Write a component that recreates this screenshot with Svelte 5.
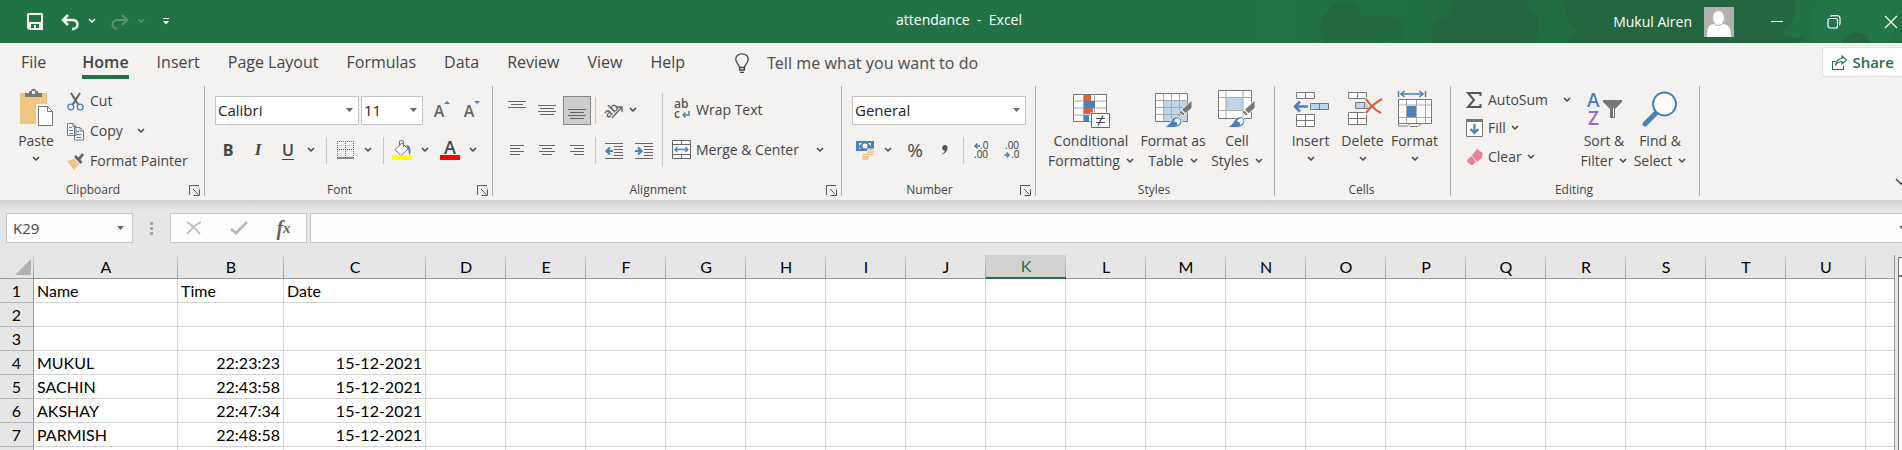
<script>
  const tabs = ['File', 'Home', 'Insert', 'Page Layout', 'Formulas', 'Data', 'Review', 'View', 'Help'];
  const columns = 'ABCDEFGHIJKLMNOPQRSTU'.split('');
  const widths = { A: 144, B: 106, C: 142 };
  const selected = 'K';
  const rows = [
    ['Name', 'Time', 'Date'],
    [],
    [],
    ['MUKUL', '22:23:23', '15-12-2021'],
    ['SACHIN', '22:43:58', '15-12-2021'],
    ['AKSHAY', '22:47:34', '15-12-2021'],
    ['PARMISH', '22:48:58', '15-12-2021'],
    []
  ];
  const isNumeric = (v) => /^\d/.test(v ?? '');
  const aligns = {
    top: 'M0 1.5h18M3 4.5h12M0 7.5h18',
    middle: 'M0 5.5h18M2 8.5h14M0 11.5h18M2 14.5h14',
    bottom: 'M0 9.5h18M2 12.5h14M0 15.5h18M2 18.5h14',
    left: 'M2 5.5h14M2 8.5h10M2 11.5h14M2 14.5h10',
    center: 'M1 5.5h16M4 8.5h10M1 11.5h16M4 14.5h10',
    right: 'M2 5.5h14M6 8.5h10M2 11.5h14M6 14.5h10'
  };
</script>

{#snippet chev()}
  <svg class="chev" width="8" height="6" viewBox="0 0 8 6"><path d="M1 1l3 3 3-3" fill="none" stroke="currentColor" stroke-width="1.5" /></svg>
{/snippet}

{#snippet tri()}
  <svg class="tri" width="7" height="4" viewBox="0 0 7 4"><path d="M0 0h7L3.500 4z" fill="#666" /></svg>
{/snippet}

{#snippet launcher(name)}
  <button class="launcher" aria-label={name}>
    <svg width="11" height="11" viewBox="0 0 11 11" fill="none" stroke="#555"><path d="M.5 10V.5H10M4 4l5.500 5.500M10.500 4.500v6h-6" /></svg>
  </button>
{/snippet}

{#snippet lines(d)}
  <svg width="18" height="20" viewBox="0 0 18 20"><path {d} stroke="#666" fill="none" /></svg>
{/snippet}

{#snippet brush()}
  <path d="M37 8v8l-9 8-4-4z" fill="#777" stroke="#f3f2f1" />
  <path d="M26 17.500l5 5" stroke="#f3f2f1" stroke-width="1.500" />
  <path d="M9 35.500c4-2 6-4 7.500-7.500s7-4.500 9.500-1.500-.5 7.500-4 8.500-8 .5-13 .5z" fill="#4a80bb" stroke="#f3f2f1" />
  <path d="M19 29.500c1-3.500 4.500-4 6-2s-.5 5-3 5.500c.5-2-.5-3.500-3-3.500z" fill="#fff" />
{/snippet}

<div class="app">
  <header class="titlebar">
    <svg class="pattern" width="642" height="43" viewBox="0 0 642 43" aria-hidden="true">
      <defs>
        <linearGradient id="fade"><stop offset="0" stop-color="#217346" /><stop offset=".35" stop-color="#226d43" /><stop offset="1" stop-color="#217346" /></linearGradient>
      </defs>
      <rect width="642" height="43" fill="url(#fade)" />
      <circle cx="592" cy="24" r="42" fill="#217a49" opacity=".35" />
      <g fill="#246641">
        <path d="M65 43l-5-8c-2-14 8-33 24-33 12 0 16 8 19 15 14-3 41-3 41 10 0 10-3 12-10 12l-25 4z" opacity=".7" />
        <path d="M173 43c-3-12 0-22 8-24 8-1 9-12 15-19h68c6 6 8 12 13 16 4 10 1 22-4 27z" />
        <path d="M304 0c0 14 6 27 14 31-4 3-9 8-10 12h225c9-1 12-4 12-7-14 3-28 0-20-7 12-10 10-18 9-29z" />
        <path d="M582 43c3-12 22-16 29 0z" />
      </g>
    </svg>
    <div class="quick">
      <button aria-label="Save"><svg width="16" height="17" viewBox="0 0 16 17"><path fill="#f3f2f1" fill-rule="evenodd" d="M1 0h14l1 1v16H2l-2-2V1zM2 2v7h12V2zM4 11v4h3v-3h2v3h3v-4z" /></svg></button>
      <button class="undo" aria-label="Undo"><svg width="19" height="16" viewBox="0 0 19 16"><path d="M7 1L2 6l5 5M2 6h9c4 0 5.500 2 5.500 4.500S14 15 11 15" fill="none" stroke="#f3f2f1" stroke-width="2.600" /></svg></button>
      <button class="more" aria-label="Undo list">{@render chev()}</button>
      <button class="undo off" aria-label="Redo"><svg width="19" height="16" viewBox="0 0 19 16"><path d="M12 1l5 5-5 5M17 6H8c-4 0-5.500 2-5.500 4.500S5 15 7 15" fill="none" stroke="#f3f2f1" stroke-width="2.200" /></svg></button>
      <button class="more off" aria-label="Redo list">{@render chev()}</button>
      <button class="custom" aria-label="Customize toolbar"><svg width="6" height="7" viewBox="0 0 6 7"><path d="M0 0h6v1H0zM0 3h6L3 6.500z" fill="#fff" /></svg></button>
    </div>
    <h1>attendance&nbsp; -&nbsp; Excel</h1>
    <div class="account">
      <span>Mukul Airen</span>
      <svg class="avatar" width="30" height="30" viewBox="0 0 30 30"><path fill="#b1b1b1" d="M0 0h30v30H0z" /><path d="M3 30c0-8 1-13 7-13 2 2 7 2 9 0 6 0 8 5 8 13z" fill="#fff" /><ellipse cx="14.500" cy="11" rx="6" ry="7.500" fill="#fff" stroke="#b1b1b1" /></svg>
      <button class="win" aria-label="Minimize"><svg width="14" height="14" viewBox="0 0 14 14"><path d="M1 6.500h12" stroke="#fff" /></svg></button>
      <button class="win" aria-label="Restore"><svg width="14" height="14" viewBox="0 0 14 14" fill="none" stroke="#fff" stroke-width="1.200"><rect x="1" y="3.500" width="9.500" height="9.500" rx="2" /><path d="M3.500 1.500c.5-.6 1-.8 2-.8H10c2 0 3 1.300 3 3V8c0 1.200-.3 1.800-1 2.300" /></svg></button>
      <button class="win close" aria-label="Close"><svg width="14" height="14" viewBox="0 0 14 14"><path d="M1 1l12 12M13 1L1 13" stroke="#fff" stroke-width="1.200" /></svg></button>
    </div>
  </header>

  <nav class="tabs">
    {#each tabs as tab}
      <a href="#{tab}" class:active={tab === 'Home'} class:file={tab === 'File'}>{tab}</a>
    {/each}
    <label class="tell">
      <svg width="14" height="20" viewBox="0 0 14 20" fill="none" stroke="#444" stroke-width="1.300"><path d="M4.500 14.500c0-3-3.700-4-3.700-8C.8 3 3.500.8 7 .8S13.200 3 13.200 6.500c0 4-3.700 5-3.700 8zM4.500 14v3h5v-3M5 19.300h4" /></svg>
      <input placeholder="Tell me what you want to do" aria-label="Tell me what you want to do" />
    </label>
    <button class="share">
      <svg width="15" height="15" viewBox="0 0 15 15" fill="none" stroke="#217346"><path d="M3.500 6.500h-3v8h11v-4M10 1l4.500 4L10 9V6.500C7 6.500 5 7.500 3.500 10.500c.5-4 2.500-7 6.500-7z" stroke-width="1.100" /></svg>
      Share
    </button>
  </nav>

  <div class="ribbon">
    <section class="group clipboard">
      <div class="body">
        <button class="big paste">
          <span class="icon"><svg width="36" height="40" viewBox="0 0 36 40"><path d="M2 5h27v31H2z" fill="#eec880" /><path d="M7 9V5h4V3h2c0-3 5-3 5 0h2v2h4v4z" fill="#777" /><path d="M14 3h3v3h-3z" fill="#f3f2f1" /><path d="M19.500 17.500h10l6 6v14h-16z" fill="#fff" stroke="#f3f2f1" stroke-width="3" /><path d="M20.500 18.500h9l5 5v14h-14zM29.500 18.500v5h5" fill="#fff" stroke="#777" /></svg></span>
          <span>Paste</span>{@render chev()}
        </button>
        <div class="stack">
          <button class="item"><svg width="17" height="19" viewBox="0 0 17 19" fill="none"><path d="M4 1l7.500 12M13 1L5.500 13" stroke="#666" stroke-width="2" /><circle cx="3.800" cy="15" r="2.900" stroke="#4a80bb" stroke-width="1.300" /><circle cx="13.200" cy="15" r="2.900" stroke="#4a80bb" stroke-width="1.300" /></svg>Cut</button>
          <button class="item"><svg width="17" height="19" viewBox="0 0 17 19"><path d="M.5 1.500H6l3 3v9H.5zM7.500 5.500H13l3.500 3.500v9H7.500z" fill="#fff" stroke="#777" /><path d="M6 1.500v3h3M13 5.500V9h3.500" fill="none" stroke="#777" /><path d="M2 5.500h3M2 8.500h4M2 11.500h4M9.500 9.500H12M9.500 12.500h5M9.500 15.500h5" stroke="#4a80bb" /></svg>Copy<span class="far">{@render chev()}</span></button>
          <button class="item"><svg width="17" height="19" viewBox="0 0 17 19"><path d="M0 9l7-2 5 5-5 6z" fill="#eec38a" /><path d="M7 5l2-2 2.500 2.500L15 1l2 2-3.500 4.500L15.500 10l-2 2z" fill="#666" /></svg>Format Painter</button>
        </div>
      </div>
      <footer><span>Clipboard</span>{@render launcher('Clipboard settings')}</footer>
    </section>

    <section class="group font">
      <div class="body rows">
        <div class="row">
          <span class="combo wide"><select aria-label="Font name"><option>Calibri</option></select>{@render tri()}</span>
          <span class="combo small"><select aria-label="Font size"><option>11</option></select>{@render tri()}</span>
          <div class="sizers">
            <button class="btn grow" aria-label="Increase font size"><span>A</span><svg width="6" height="3" viewBox="0 0 6 3"><path d="M0 3l3-3 3 3z" fill="#4a80bb" /></svg></button>
            <button class="btn grow" aria-label="Decrease font size"><span>A</span><svg width="6" height="3" viewBox="0 0 6 3"><path d="M0 0l3 3 3-3z" fill="#4a80bb" /></svg></button>
          </div>
        </div>
        <div class="row tools">
          <button class="btn bold">B</button>
          <button class="btn italic">I</button>
          <button class="btn under">U</button>
          <button class="drop" aria-label="Underline style">{@render chev()}</button>
          <i class="sep"></i>
          <button class="btn" aria-label="Borders"><svg width="17" height="18" viewBox="0 0 17 18" fill="none" stroke="#666"><path d="M0 .5h17M0 8.500h17M.5 0v17M8.500 0v17M16.500 0v17" stroke-dasharray="1 1" /><path d="M0 17h17" stroke-width="1.500" /></svg></button>
          <button class="drop" aria-label="Border styles">{@render chev()}</button>
          <i class="sep"></i>
          <button class="btn" aria-label="Fill colour"><svg width="20" height="20" viewBox="0 0 20 20"><path d="M3 9.500L10 3l6 6-7 6.500z" fill="#fff" stroke="#777" /><path d="M7.500 6V2c0-2 4-2 4 0v5" fill="none" stroke="#777" stroke-width="1.200" /><path d="M14 5c4 0 5.500 4 4 10-1-1-2-3-1.500-5z" fill="#4a80bb" /><path d="M0 15h20v5H0z" fill="#ff0" /></svg></button>
          <button class="drop" aria-label="Fill colours">{@render chev()}</button>
          <button class="btn colour" aria-label="Font colour"><span>A</span><i></i></button>
          <button class="drop" aria-label="Font colours">{@render chev()}</button>
        </div>
      </div>
      <footer><span>Font</span>{@render launcher('Font settings')}</footer>
    </section>

    <section class="group alignment">
      <div class="body">
        <div class="rows">
          <div class="row tools">
            <button class="btn" aria-label="Top align">{@render lines(aligns.top)}</button>
            <button class="btn" aria-label="Middle align">{@render lines(aligns.middle)}</button>
            <button class="btn pressed" aria-label="Bottom align">{@render lines(aligns.bottom)}</button>
            <i class="sep tight"></i>
            <button class="btn" aria-label="Orientation"><svg width="20" height="20" viewBox="0 0 20 20"><text x="-1" y="16" font-family="Open Sans, sans-serif" font-size="13" font-weight="600" fill="#666" transform="rotate(-45 5 11)">ab</text><path d="M8 18L18 7M13 7h5v5" fill="none" stroke="#666" stroke-width="1.300" /></svg></button>
            <button class="drop near" aria-label="Orientation options">{@render chev()}</button>
          </div>
          <div class="row tools">
            <button class="btn" aria-label="Align left">{@render lines(aligns.left)}</button>
            <button class="btn" aria-label="Centre">{@render lines(aligns.center)}</button>
            <button class="btn" aria-label="Align right">{@render lines(aligns.right)}</button>
            <i class="sep tight"></i>
            <button class="btn" aria-label="Decrease indent"><svg width="18" height="17" viewBox="0 0 18 17"><path d="M0 1.500h18M9 4.500h9M9 7.500h9M9 10.500h9M9 13.500h9M0 16.500h18" stroke="#666" /><path d="M8 9H2M5 5.500L1.500 9 5 12.500" fill="none" stroke="#4a80bb" stroke-width="2.200" /></svg></button>
            <button class="btn" aria-label="Increase indent"><svg width="18" height="17" viewBox="0 0 18 17"><path d="M0 1.500h18M9 4.500h9M9 7.500h9M9 10.500h9M9 13.500h9M0 16.500h18" stroke="#666" /><path d="M0 9h6M3 5.500L6.500 9 3 12.500" fill="none" stroke="#4a80bb" stroke-width="2.200" /></svg></button>
          </div>
        </div>
        <i class="sep tall"></i>
        <div class="rows">
          <button class="item"><svg width="20" height="20" viewBox="0 0 20 20"><text x="2" y="8" font-family="Open Sans, sans-serif" font-size="12" font-weight="600" fill="#555">ab</text><text x="2" y="18" font-family="Open Sans, sans-serif" font-size="12" font-weight="600" fill="#555">c</text><path d="M17 11v4h-6M13.500 12.500L11 15l2.500 2.500" fill="none" stroke="#4a80bb" stroke-width="1.500" /></svg>Wrap Text</button>
          <button class="item"><svg width="20" height="20" viewBox="0 0 20 20"><path d="M.5.5h18v18H.5zM.5 4.500h18M.5 14.500h18M9.500.5v4M9.500 14.500v4" fill="#fff" stroke="#666" /><path d="M3 9.500h13M5.500 7L3 9.500 5.500 12M13.500 7L16 9.500 13.500 12" fill="none" stroke="#4a80bb" stroke-width="1.300" /></svg>Merge &amp; Center<span class="far">{@render chev()}</span></button>
        </div>
      </div>
      <footer><span>Alignment</span>{@render launcher('Alignment settings')}</footer>
    </section>

    <section class="group number">
      <div class="body rows">
        <div class="row">
          <span class="combo full"><select aria-label="Number format"><option>General</option></select>{@render tri()}</span>
        </div>
        <div class="row tools">
          <button class="btn" aria-label="Accounting format"><svg width="20" height="20" viewBox="0 0 20 20"><path d="M1 1h18v10H1z" fill="#4a80bb" /><path d="M4 3h3L4 6zM16 3h-3l3 3zM4 9h2L4 7z" fill="#fff" /><circle cx="10" cy="6" r="2.500" fill="#fff" /><path d="M12 8.500h7.500v7H15V19H7v-6h5z" fill="#f3f2f1" /><path d="M12.500 9.500h6M12 12h7M12.500 14.500h6M7.500 14.500h6M7 17h7M7.500 19h6" stroke="#eec07a" stroke-width="1.700" /></svg></button>
          <button class="drop" aria-label="Accounting formats">{@render chev()}</button>
          <button class="btn percent">%</button>
          <button class="btn comma" aria-label="Comma style"><svg width="6" height="10" viewBox="0 0 6 10"><path d="M3 0c4 0 3.500 7-2.500 9.500L0 9c2-1.200 2.800-2.500 2.800-3.500C-.8 5.500-.5 0 3 0z" fill="#555" /></svg></button>
          <i class="sep tight"></i>
          <button class="btn" aria-label="Increase decimal"><svg width="18" height="20" viewBox="0 0 18 20" font-family="Open Sans, sans-serif" font-size="10" fill="#333"><text x="7" y="9">.0</text><text x="1" y="18">.00</text><path d="M7 6H2M4.500 3.500L2 6l2.500 2.500" fill="none" stroke="#4a80bb" stroke-width="1.600" /></svg></button>
          <button class="btn" aria-label="Decrease decimal"><svg width="18" height="20" viewBox="0 0 18 20" font-family="Open Sans, sans-serif" font-size="10" fill="#333"><text x="2" y="9">.00</text><text x="8" y="18">.0</text><path d="M1 15h5M3.500 12.500L6 15l-2.500 2.500" fill="none" stroke="#4a80bb" stroke-width="1.600" /></svg></button>
        </div>
      </div>
      <footer><span>Number</span>{@render launcher('Number settings')}</footer>
    </section>

    <section class="group styles">
      <div class="body">
        <button class="big w88">
          <span class="icon"><svg width="38" height="36" viewBox="-1 0 38 36"><path d="M.5 2.500h33v27H.5z" fill="#fff" stroke="#777" /><path d="M1 9h32M1 16h32M1 23h32M10.500 3v26M21.500 3v26" stroke="#aaa" /><path d="M11 3h7v6h-7zM11 16h9v6h-9z" fill="#d96040" /><path d="M11 9h11v7H11zM11 23h5v6h-5z" fill="#4a80bb" /><path d="M17.500 20.500h19v15h-19z" fill="#f3f2f1" /><path d="M18.500 21.500h18v14h-18z" fill="#fff" stroke="#666" /><path d="M23 26.500h9M23 30.500h9M30 23.500l-5 10" stroke="#444" stroke-width="1.200" /></svg></span>
          <span>Conditional</span><span>Formatting {@render chev()}</span>
        </button>
        <button class="big w76">
          <span class="icon"><svg width="42" height="36" viewBox="-3 0 42 36"><path d="M.5 1.500h32v28H.5z" fill="#fff" stroke="#777" /><path d="M9 9h23v20H9z" fill="#c0d4e9" /><path d="M1 8.500h32M1 15.500h32M1 22.500h32M8.500 2v27M16.500 2v27M24.500 2v27" stroke="#aaa" />{@render brush()}</svg></span>
          <span>Format as</span><span>Table {@render chev()}</span>
        </button>
        <button class="big w52">
          <span class="icon"><svg width="38" height="38" viewBox="0 -2 38 38"><path d="M.5-1.500h33v28H.5z" fill="#fff" stroke="#777" /><path d="M8 5h17v14H8z" fill="#c0d4e9" /><path d="M1 5.500h32M1 18.500h32M8-1v27M25-1v27" stroke="#aaa" />{@render brush()}</svg></span>
          <span>Cell</span><span>Styles {@render chev()}</span>
        </button>
      </div>
      <footer><span>Styles</span></footer>
    </section>

    <section class="group cells">
      <div class="body">
        <button class="big w52">
          <span class="icon"><svg width="38" height="38" viewBox="0 0 38 38"><path d="M4.500 2.500h18v6h-18zM13.500 2.500v6M4.500 24.500h18v12h-18zM4.500 30.500h18M13.500 24.500v12" fill="#fff" stroke="#777" /><path d="M18.500 13.500h18v6h-18zM27.500 13.500v6" fill="#c0d4e9" stroke="#777" /><path d="M16 16.500H3M8 11.500l-5 5 5 5" fill="none" stroke="#4a80bb" stroke-width="2.500" /></svg></span>
          <span>Insert</span>{@render chev()}
        </button>
        <button class="big w52">
          <span class="icon"><svg width="38" height="38" viewBox="0 0 38 38"><path d="M4.500 2.500h18v6h-18zM13.500 2.500v6M4.500 22.500h18v12h-18zM4.500 28.500h18M13.500 22.500v12" fill="#fff" stroke="#777" /><path d="M11.500 12.500h14v6h-14zM20.500 12.500v6" fill="#c0d4e9" stroke="#777" /><path d="M21 9l15 14M38 9L22 24" stroke="#f3f2f1" stroke-width="5" /><path d="M22 9c4 6 9 11 15 14M38 9c-7 4-12 8-16 14" fill="none" stroke="#d96040" stroke-width="2.200" /></svg></span>
          <span>Delete</span>{@render chev()}
        </button>
        <button class="big w52">
          <span class="icon"><svg width="36" height="38" viewBox="0 0 36 38"><path d="M1.500 9.500h33v24h-33zM1.500 33v3h9l3-3M13 36.500h8l3-3" fill="#fff" stroke="#777" /><path d="M2 15h32M2 27.500h32M9.500 10v23M19.500 10v23M28.500 10v23" stroke="#aaa" /><path d="M10 16h9v11h-9z" fill="#4a80bb" /><path d="M1.500 1v6M28.500 1v6M4 4h22M7.500 1L4 4l3.500 3M22.500 1L26 4l-3.500 3" fill="none" stroke="#4a80bb" stroke-width="1.500" /></svg></span>
          <span>Format</span>{@render chev()}
        </button>
      </div>
      <footer><span>Cells</span></footer>
    </section>

    <section class="group editing">
      <div class="body">
        <div class="stack">
          <button class="item"><svg width="18" height="18" viewBox="0 0 18 18"><path d="M15.500 5V2H3l6 7-6 7h12.500v-3" fill="none" stroke="#555" stroke-width="2" /></svg>AutoSum<span class="far">{@render chev()}</span></button>
          <button class="item"><svg width="18" height="18" viewBox="0 0 18 18"><path d="M1.500.5h16v17h-16z" fill="#fff" stroke="#777" /><path d="M1 0h17v3H1z" fill="#777" /><path d="M9.500 5v9M5.500 10l4 4 4-4" fill="none" stroke="#4a80bb" stroke-width="2.200" /></svg>Fill {@render chev()}</button>
          <button class="item"><svg width="18" height="18" viewBox="0 0 18 18"><path d="M12 1.500l5 3.500v4l-5 4.500-4.500-6z" fill="#e88496" stroke="#e88496" stroke-linejoin="round" /><path d="M6.500 8L11 14l-3.500 3H6l-4-3.500V12z" fill="#e88496" /></svg>Clear {@render chev()}</button>
        </div>
        <button class="big w56">
          <span class="icon"><svg width="36" height="38" viewBox="0 0 36 38" font-family="Open Sans, sans-serif" font-size="19" font-weight="600"><text x="1" y="17" fill="#4a80bb">A</text><text x="2" y="35" fill="#9b67b8">Z</text><path d="M17 10h19v2l-7 7v9h-5v-9l-7-7z" fill="#777" /><path d="M27 18h1v9h-1z" fill="#fff" /></svg></span>
          <span>Sort &amp;</span><span>Filter {@render chev()}</span>
        </button>
        <button class="big w56">
          <span class="icon"><svg width="36" height="38" viewBox="0 0 36 38"><path d="M3 34l12-12" stroke="#4a80bb" stroke-width="5" stroke-linecap="round" /><circle cx="22.500" cy="14" r="11.500" fill="#fff" stroke="#4a80bb" stroke-width="2" /></svg></span>
          <span>Find &amp;</span><span>Select {@render chev()}</span>
        </button>
      </div>
      <footer><span>Editing</span></footer>
    </section>
    <button class="collapse" aria-label="Collapse ribbon"><svg width="12" height="8" viewBox="0 0 12 8"><path d="M1 1l5 5 5-5" fill="none" stroke="#444" stroke-width="1.500" /></svg></button>
  </div>

  <div class="formula">
    <span class="combo name"><input aria-label="Name box" value="K29" />{@render tri()}</span>
    <span class="dots"><i></i><i></i><i></i></span>
    <div class="entry">
      <button aria-label="Cancel"><svg width="16" height="14" viewBox="0 0 16 14"><path d="M1 1c5 3 9 7 13 12M15 1C9 4 5 8 1 13" fill="none" stroke="#bbb" stroke-width="1.800" /></svg></button>
      <button aria-label="Enter"><svg width="18" height="14" viewBox="0 0 18 14"><path d="M1 8l5 4L17 1" fill="none" stroke="#bbb" stroke-width="2.800" /></svg></button>
      <button class="fx">f<small>x</small></button>
    </div>
    <div class="bar"><input aria-label="Formula bar" />{@render tri()}</div>
  </div>

  <main class="sheet">
    <table>
      <colgroup>
        <col style="width: 34px" />
        {#each columns as c}<col style="width: {widths[c] ?? 80}px" />{/each}
        <col />
      </colgroup>
      <thead>
        <tr>
          <th class="corner"><svg width="16" height="16" viewBox="0 0 16 16"><path d="M16 0v16H0z" fill="#b2b2b2" /></svg></th>
          {#each columns as c}<th class:on={c === selected}>{c}</th>{/each}
          <th></th>
        </tr>
      </thead>
      <tbody>
        {#each rows as row, r}
          <tr>
            <th>{r + 1}</th>
            {#each columns as _, c}<td class:num={isNumeric(row[c])}>{row[c] ?? ''}</td>{/each}
            <td></td>
          </tr>
        {/each}
      </tbody>
    </table>
    <div class="scroll"><i></i></div>
  </main>
</div>

<style>
  :global(body) { margin: 0; }
  * { box-sizing: border-box; }
  .app {
    height: 100vh;
    overflow: hidden;
    display: flex;
    flex-direction: column;
    background: #e6e6e6;
    color: #444;
    font: 14px/20px "Open Sans", "Noto Sans", sans-serif;
  }
  button, input, select {
    margin: 0;
    padding: 0;
    border: 0;
    background: none;
    color: inherit;
    font: inherit;
    outline: 0;
    appearance: none;
  }
  svg { flex: none; display: block; overflow: visible; }

  .titlebar {
    position: relative;
    flex: none;
    height: 43px;
    display: grid;
    grid-template-columns: 1fr auto 1fr;
    align-items: center;
    background: #217346;
    color: #fff;
  }
  .titlebar > * { position: relative; }
  .titlebar .pattern { position: absolute; top: 0; right: 0; overflow: hidden; }
  h1 { margin: 0 0 4px 16px; font-size: 14px; font-weight: 400; line-height: 20px; }
  .quick { display: flex; align-items: center; padding-left: 27px; height: 43px; }
  .quick button { display: flex; }
  .quick .undo { margin-left: 18px; }
  .quick .more { margin: 0 -4px 2px 8px; }
  .quick .custom { margin-left: 22px; }
  .quick .off { opacity: .25; }
  .account { display: flex; align-items: center; justify-content: flex-end; }
  .avatar { margin: 0 14px 0 12px; }
  .win { width: 57px; height: 43px; display: grid; place-items: center; }
  .close { width: 40px; justify-items: start; padding-left: 22px; }

  .tabs {
    flex: none;
    display: flex;
    align-items: center;
    gap: 28px;
    height: 43px;
    padding-left: 21px;
    background: #f3f2f1;
    font-size: 16px;
  }
  .tabs a { height: 36px; margin-bottom: 7px; line-height: 38px; color: #444; text-decoration: none; white-space: nowrap; }
  .tabs .file { margin-right: 8px; }
  .tabs .active { font-weight: 600; border-bottom: 4px solid #217346; }
  .tell { display: flex; align-items: center; gap: 18px; margin: 0 0 4px 22px; font-family: "Noto Sans", sans-serif; }
  .tell input { width: 260px; line-height: 24px; }
  .tell input::placeholder { color: #555; opacity: 1; }
  .share {
    display: flex;
    align-items: center;
    gap: 5px;
    height: 30px;
    margin: 0 0 5px auto;
    padding: 0 8px 0 9px;
    border: 1px solid #e1dfdd;
    border-right: 0;
    border-radius: 3px 0 0 3px;
    background: #fff;
    color: #217346;
    font-size: 15px;
    font-weight: 600;
  }

  .ribbon { flex: none; display: flex; background: #f3f2f1; padding-bottom: 4px; }
  .group { flex: none; display: flex; flex-direction: column; height: 110px; border-right: 1px solid #b1afad; white-space: nowrap; }
  .body { flex: none; display: flex; height: 96px; }
  footer { flex: none; display: flex; align-items: center; height: 16px; padding-right: 2px; font-size: 12px; line-height: 16px; }
  footer span { flex: 1; text-align: center; }
  .launcher { width: 16px; display: grid; place-items: center; }
  .clipboard { width: 205px; }
  .font { width: 288px; }
  .alignment { width: 349px; }
  .number { width: 194px; }
  .styles { width: 239px; }
  .cells { width: 176px; }
  .editing { width: 249px; }
  .styles .body, .cells .body { justify-content: center; }

  .big { display: flex; flex-direction: column; align-items: center; justify-content: flex-start; height: 90px; }
  .big > span { display: flex; align-items: center; gap: 6px; }
  .big .icon { height: 45px; align-items: flex-end; padding-bottom: 3px; }
  .big > .chev, .big > :global(.chev) { margin-top: 5px; }
  .w88 { width: 88px; }
  .w76 { width: 76px; }
  .w52 { width: 52px; }
  .w56 { width: 56px; }
  .paste { width: 46px; margin: 0 8px 0 13px; }
  .stack { display: flex; flex-direction: column; }
  .stack .item { height: 30px; }
  .item { display: flex; align-items: center; gap: 6px; }
  .item .far { margin-left: 8px; }
  .editing .stack { width: 106px; margin: 0 5px 0 14px; }
  .editing .item { height: 29px; gap: 5px; }
  .editing .stack .item:first-child { height: 27px; }
  .editing .far { margin-left: auto; }
  .alignment .item { height: 30px; gap: 4px; }
  .alignment .far { margin-left: 13px; }

  .rows { display: flex; flex-direction: column; gap: 10px; padding-top: 9px; }
  .row { display: flex; align-items: center; height: 30px; }
  .font .body, .number .body { padding-left: 10px; }
  .font .tools, .number .tools { margin-left: -2px; }
  .alignment .body { padding-left: 9px; }
  .combo {
    display: grid;
    align-items: center;
    height: 29px;
    background: #fff;
    border: 1px solid #c6c6c6;
    color: #222;
    font-size: 15px;
  }
  .combo > :global(*) { grid-area: 1 / 1; }
  .combo select, .combo input { width: 100%; height: 27px; padding-left: 2px; }
  .combo .tri { justify-self: end; margin-right: 5px; pointer-events: none; }
  .wide { width: 144px; margin-right: 2px; }
  .small { width: 62px; }
  .full { width: 174px; }
  .sizers { display: flex; margin-left: 4px; }
  .btn { width: 30px; height: 29px; display: flex; align-items: center; justify-content: center; flex: none; }
  .drop { width: 16px; height: 29px; display: grid; place-items: center; flex: none; }
  .near { width: 8px; }
  .sep { flex: none; width: 1px; height: 27px; margin: 0 3px 0 7px; background: #c8c6c4; }
  .sep.tight { margin: 0 3px; }
  .sep.tall { height: 74px; margin: 7px 9px 0 4px; }
  .alignment .rows:first-child { width: 156px; }
  .pressed { width: 28px; margin: 0 1px; background: #cdcccb; border: 1px solid #8a8886; }
  .grow { align-items: flex-start; font-size: 16px; font-weight: 600; color: #666; }
  .grow span { margin-top: 5px; }
  .grow svg { margin-top: 5px; }
  .bold { font-weight: 700; font-size: 16px; }
  .italic { font: italic 700 17px/20px "Liberation Serif", serif; }
  .under { font-weight: 600; font-size: 16px; text-decoration: underline; text-underline-offset: 3px; }
  .colour { flex-direction: column; margin-left: 2px; font-size: 18px; font-weight: 600; line-height: 15px; }
  .colour i { width: 20px; height: 5px; background: #f00; }
  .percent { margin-left: 4px; font-size: 19px; }

  .collapse { margin: 0 0 4px auto; align-self: flex-end; width: 7px; height: 20px; overflow: hidden; }

  .formula {
    flex: none;
    display: flex;
    align-items: center;
    height: 55px;
    padding: 1px 0 0 6px;
    background: linear-gradient(#cfcfcf, #e6e6e6 10px);
  }
  .formula .combo, .entry, .bar { height: 30px; background: #fdfdfd; border: 1px solid #c6c6c6; color: #444; }
  .name { width: 127px; }
  .formula .name input { padding-left: 6px; }
  .formula .name .tri { margin-right: 8px; }
  .dots { display: grid; gap: 2px; margin: 0 17px; }
  .dots i { width: 3px; height: 3px; background: #a6a6a6; }
  .entry { width: 137px; display: grid; grid-template-columns: repeat(3, 1fr); }
  .entry button { display: flex; align-items: center; justify-content: center; }
  .entry .fx { font: italic 700 20px/24px "Liberation Serif", serif; color: #666; }
  .fx small { font-size: 15px; }
  .bar { flex: 1; display: flex; align-items: center; margin-left: 3px; border-right: 0; }
  .bar input { flex: 1; height: 28px; padding-left: 6px; }
  .bar .tri { margin-right: -4px; }

  .sheet { flex: 1; display: flex; min-height: 0; font: 16px/20px Lato, "Open Sans", sans-serif; color: #000; }
  table { flex: 1; width: 0; table-layout: fixed; border-collapse: separate; border-spacing: 0; }
  table { border-right: 1px solid #999; align-self: flex-start; }
  th, td { height: 24px; padding: 0; border-right: 1px solid #d4d4d4; border-bottom: 1px solid #d4d4d4; overflow: hidden; white-space: nowrap; }
  th { font-weight: 400; text-align: center; background: #e6e6e6; }
  td { background: #fff; padding: 0 3px; text-align: left; }
  td.num { text-align: right; }
  thead th { border-bottom-color: #999; border-right: 0; background: linear-gradient(#cfcfcf, #999) right / 1px 100% no-repeat #e6e6e6; }
  thead th:last-child { background: #e6e6e6; }
  thead th.on { border-bottom: 2px solid #217346; color: #217346; background-color: #d2d2d2; }
  tbody th { border-right-color: #999; border-bottom-color: #b5b5b5; }
  tbody td:last-child { border-right: 0; }
  .corner svg { margin: 0 3px 0 auto; }
  .scroll { width: 4px; margin: 2px 0 0 3px; background: #fff; border: solid #777; border-width: 1px 0 0 1px; }
  .scroll i { display: block; height: 19px; border-bottom: 2px solid #777; }
</style>
